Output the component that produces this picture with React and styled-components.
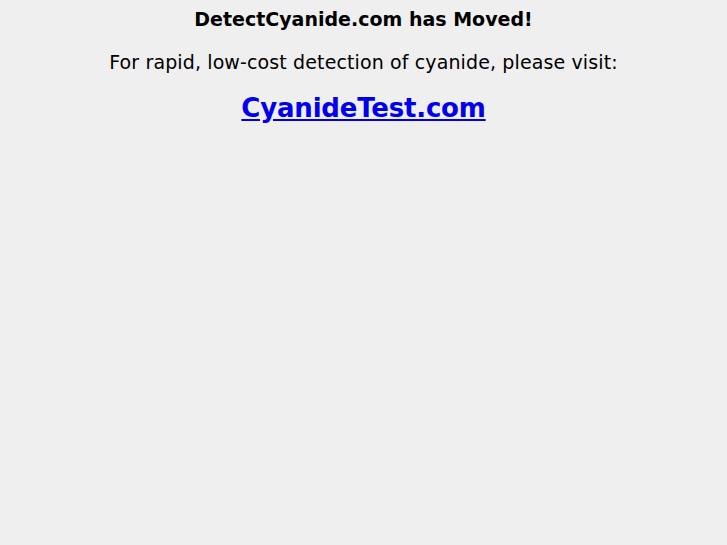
import React from 'react';
import styled, { createGlobalStyle } from 'styled-components';

const GlobalStyle = createGlobalStyle`
  html, body {
    margin: 0;
    padding: 0;
    background: #efefef;
  }
  body {
    font-family: "DejaVu Sans", sans-serif;
    color: #000000;
  }
`;

const Page = styled.main`
  display: flex;
  flex-direction: column;
  align-items: center;
  text-align: center;
  padding-top: 8px;
`;

const Heading = styled.h1`
  font-size: 19px;
  font-weight: bold;
  line-height: 22px;
  margin: 0;
`;

const Message = styled.p`
  font-size: 19px;
  line-height: 22px;
  letter-spacing: 0.12px;
  margin: 21px 0 0;
`;

const NewSite = styled.a`
  display: inline-block;
  margin-top: 19px;
  font-size: 26px;
  font-weight: bold;
  line-height: 32px;
  letter-spacing: -0.2px;
  color: #0000ee;
  text-decoration: underline;
`;

export default function App() {
  return (
    <>
      <GlobalStyle />
      <Page>
        <Heading>DetectCyanide.com has Moved!</Heading>
        <Message>For rapid, low-cost detection of cyanide, please visit:</Message>
        <NewSite href="#">CyanideTest.com</NewSite>
      </Page>
    </>
  );
}
